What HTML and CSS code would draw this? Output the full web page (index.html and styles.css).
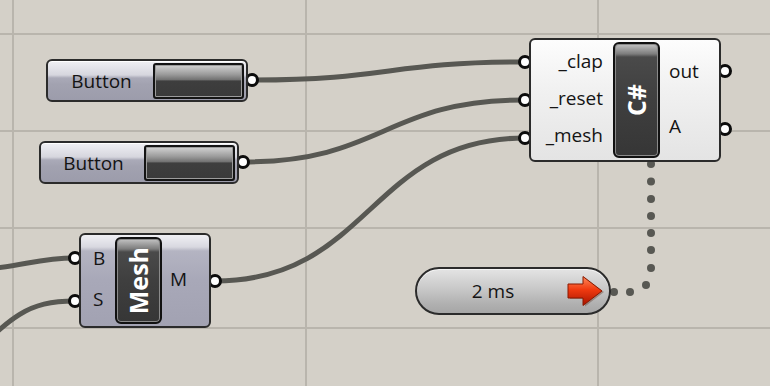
FILE: index.html
```html
<!DOCTYPE html>
<html>
<head>
<meta charset="utf-8">
<link rel="stylesheet" href="styles.css">
</head>
<body>
<div class="canvas">
  <svg class="layer" width="770" height="386" viewBox="0 0 770 386">
    <g class="grid">
      <rect x="12" y="0" width="2" height="386"/>
      <rect x="305" y="0" width="2" height="386"/>
      <rect x="597" y="0" width="2" height="386"/>
      <rect x="0" y="33" width="770" height="2"/>
      <rect x="0" y="130" width="770" height="2"/>
      <rect x="0" y="227" width="770" height="2"/>
      <rect x="0" y="327" width="770" height="2"/>
    </g>
    <g class="wires">
      <path d="M252 80 C390 80 388 62 525 62"/>
      <path d="M243 162 C384 162 384 100 525 100"/>
      <path d="M215 281 C370 281 370 138 525 138"/>
      <path d="M-60 272 C20 270 30 258 75 258"/>
      <path d="M-40 368 C10 318 25 301 75 301"/>
    </g>
    <g class="dots">
      <circle cx="651" cy="164" r="4"/>
      <circle cx="651" cy="181.5" r="4"/>
      <circle cx="651" cy="199" r="4"/>
      <circle cx="651" cy="216" r="4"/>
      <circle cx="651" cy="233" r="4"/>
      <circle cx="651" cy="250" r="4"/>
      <circle cx="651" cy="268" r="4"/>
      <circle cx="646" cy="285" r="4"/>
      <circle cx="630" cy="292" r="4"/>
      <circle cx="614" cy="292" r="4"/>
    </g>
    <g class="ports">
      <circle cx="252" cy="80" r="5.5"/>
      <circle cx="243" cy="162" r="5.5"/>
      <circle cx="525" cy="62" r="5.5"/>
      <circle cx="525" cy="100" r="5.5"/>
      <circle cx="525" cy="138" r="5.5"/>
      <circle cx="725" cy="71" r="5.5"/>
      <circle cx="725" cy="129" r="5.5"/>
      <circle cx="75" cy="258" r="5.5"/>
      <circle cx="75" cy="301" r="5.5"/>
      <circle cx="215" cy="281" r="5.5"/>
    </g>
  </svg>

  <div class="node button b1">
    <span class="btn-label">Button</span>
    <span class="knob"></span>
  </div>

  <div class="node button b2">
    <span class="btn-label">Button</span>
    <span class="knob"></span>
  </div>

  <div class="node comp cs">
    <div class="inputs">
      <span>_clap</span>
      <span>_reset</span>
      <span>_mesh</span>
    </div>
    <div class="bar"><span class="bar-text">C#</span></div>
    <div class="outputs">
      <span>out</span>
      <span>A</span>
    </div>
  </div>

  <div class="node comp mesh">
    <div class="inputs">
      <span>B</span>
      <span>S</span>
    </div>
    <div class="bar"><span class="bar-text">Mesh</span></div>
    <div class="outputs">
      <span>M</span>
    </div>
  </div>

  <div class="node timer">
    <span class="timer-label">2 ms</span>
    <svg class="arrow" width="38" height="32" viewBox="0 0 38 32">
      <defs>
        <linearGradient id="red" x1="0" y1="0" x2="0" y2="1">
          <stop offset="0" stop-color="#ff8a5a"/>
          <stop offset="0.45" stop-color="#f03a10"/>
          <stop offset="1" stop-color="#a81400"/>
        </linearGradient>
      </defs>
      <path d="M2 9 H17 V1.5 L36 16 L17 30.5 V23 H2 Z" fill="#5a2a1a" opacity="0.35" transform="translate(1 1)"/>
      <path d="M1 9 H16 V1.5 L35 16 L16 30.5 V23 H1 Z" fill="url(#red)" stroke="#8a1800" stroke-width="1"/>
    </svg>
  </div>
</div>
</body>
</html>
```

FILE: styles.css
```css
* {
  box-sizing: border-box;
  margin: 0;
  padding: 0;
}

html, body {
  width: 770px;
  height: 386px;
  overflow: hidden;
}

body {
  background: #d4d0c8;
  font-family: "Open Sans", "Noto Sans", sans-serif;
  color: #141414;
}

.canvas {
  position: relative;
  width: 770px;
  height: 386px;
}

.layer {
  position: absolute;
  left: 0;
  top: 0;
}

.grid rect {
  fill: #b9b5ad;
}

.wires path {
  fill: none;
  stroke: #585853;
  stroke-width: 5;
}

.dots circle {
  fill: #585853;
}

.ports circle {
  fill: #ffffff;
  stroke: #0c0c0c;
  stroke-width: 3;
}

/* ---------- nodes ---------- */
.node {
  position: absolute;
  display: flex;
  border: 2px solid #2b2b2b;
  border-radius: 6px;
}

.button {
  height: 43px;
  padding: 2px 2px 1px 2px;
  background: linear-gradient(to bottom, #f0f0f4 0px, #d6d6de 14px, #aaaab8 17px, #a2a2b0 60%, #9c9cab 100%);
  box-shadow: inset 0 1px 0 #ffffff;
}

.b1 {
  left: 46px;
  top: 59px;
  width: 202px;
}

.b2 {
  left: 39px;
  top: 141px;
  width: 200px;
}

.btn-label {
  flex: 1;
  display: flex;
  align-items: center;
  justify-content: center;
  font-size: 19px;
  padding-bottom: 1px;
}

.knob {
  width: 91px;
  border: 2px solid #141414;
  border-radius: 3px;
  background: linear-gradient(to bottom, #d4d4d4 0%, #9a9a9a 30%, #727272 46%, #3e3e3e 50%, #3a3a3a 100%);
  box-shadow: inset 0 0 0 1px #9c9c9c;
}

.comp {
  padding: 2px 0;
}

.cs {
  left: 529px;
  top: 38px;
  width: 192px;
  height: 124px;
  background: linear-gradient(to bottom, #fdfdfd 0%, #f1f1f1 40%, #e4e4e4 100%);
}

.mesh {
  left: 79px;
  top: 233px;
  width: 132px;
  height: 95px;
  background: linear-gradient(to bottom, #f0f0f4 0px, #d8d8e0 12px, #b4b4c2 16px, #a8a8b8 50%, #a2a2b2 100%);
}

.inputs,
.outputs {
  display: flex;
  flex-direction: column;
  font-size: 19px;
  padding: 1px 0 5px;
}

.inputs span,
.outputs span {
  flex: 1;
  display: flex;
  align-items: center;
}

.cs .inputs {
  width: 82px;
  padding-right: 10px;
}

.cs .inputs span {
  justify-content: flex-end;
}

.cs .outputs {
  flex: 1;
  padding-left: 9px;
}

.mesh .inputs {
  width: 34px;
  padding-left: 12px;
}

.mesh .outputs {
  flex: 1;
  padding-left: 8px;
}

.bar {
  width: 47px;
  border: 2px solid #111111;
  border-radius: 6px;
  background: linear-gradient(to bottom, #c4c4c4 0px, #7c7c7c 10px, #4a4a4a 13px, #3f3f3f 50%, #363636 100%);
  box-shadow: inset 0 0 0 1px #8a8a8a;
  display: flex;
  align-items: center;
  justify-content: center;
}

.bar-text {
  writing-mode: vertical-rl;
  transform: rotate(180deg);
  color: #ffffff;
  font-weight: 700;
  font-size: 25px;
  line-height: 1;
}

.timer {
  left: 415px;
  top: 267px;
  width: 196px;
  height: 48px;
  border-radius: 24px;
  align-items: center;
  padding-right: 4px;
  background: linear-gradient(to bottom, #e4e4e4 0%, #c8c8c8 45%, #b0b0b0 80%, #a6a6a6 100%);
  box-shadow: inset 0 1px 0 #f4f4f4;
}

.timer-label {
  flex: 1;
  text-align: center;
  font-size: 19px;
  padding-left: 2px;
}

.arrow {
  display: block;
}
```
